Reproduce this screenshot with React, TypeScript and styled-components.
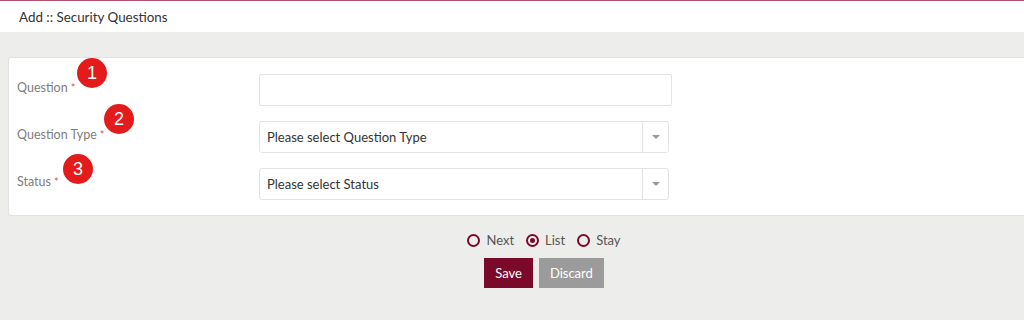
import styled, { createGlobalStyle } from 'styled-components';

const GlobalStyle = createGlobalStyle`
  html, body {
    margin: 0;
    padding: 0;
    background: #ededec;
    font-family: Lato, "Open Sans", sans-serif;
    overflow: hidden;
  }
`;

const Page = styled.div`
  width: 1024px;
  height: 320px;
  display: flex;
  flex-direction: column;
  background: #ededec;
`;

const Header = styled.div`
  height: 31px;
  background: #fff;
  border-top: 1px solid #b3506e;
  display: flex;
  align-items: center;
  padding-left: 19px;
  font-size: 13.4px;
  color: #333;
`;

const Body = styled.div`
  padding: 25px 0 0 8px;
  display: flex;
  flex-direction: column;
`;

const Card = styled.div`
  background: #fff;
  border: 1px solid #e2e2e2;
  border-right: none;
  border-radius: 3px 0 0 3px;
  padding: 16px 0 15px 8px;
  display: flex;
  flex-direction: column;
  gap: 15px;
`;

const Row = styled.div`
  display: grid;
  grid-template-columns: 242px auto;
  align-items: center;
`;

const Label = styled.label`
  position: relative;
  font-size: 12.5px;
  color: #7d7d7d;
  margin-bottom: 5px;

  span {
    color: #e05555;
    margin-left: 3px;
    font-size: 11px;
  }
`;

const Badge = styled.div<{ $left: number; $top: number }>`
  position: absolute;
  left: ${(p) => p.$left}px;
  top: ${(p) => p.$top}px;
  width: 30px;
  height: 30px;
  border-radius: 50%;
  background: #e31b1b;
  color: #fff;
  font-family: "Liberation Sans", Arial, sans-serif;
  font-size: 18px;
  display: flex;
  align-items: center;
  justify-content: center;
`;

const TextInput = styled.div`
  width: 411px;
  height: 30px;
  border: 1px solid #e3e3e3;
  border-radius: 2px;
  background: #fff;
`;

const Select = styled.div`
  width: 408px;
  height: 30px;
  border: 1px solid #e3e3e3;
  border-radius: 3px;
  background: #fff;
  display: flex;
  align-items: center;
`;

const SelectText = styled.div`
  flex: 1;
  padding-left: 7px;
  font-size: 13px;
  color: #333;
`;

const Arrow = styled.div`
  width: 25px;
  height: 30px;
  border-left: 1px solid #e3e3e3;
  display: flex;
  align-items: center;
  justify-content: center;

  &::after {
    content: '';
    border-left: 4px solid transparent;
    border-right: 4px solid transparent;
    border-top: 4px solid #999;
  }
`;

const Actions = styled.div`
  display: flex;
  flex-direction: column;
  align-items: center;
  padding-top: 16px;
  padding-left: 56px;
  gap: 10px;
`;

const RadioGroup = styled.div`
  display: flex;
  gap: 12px;
  font-size: 13px;
  color: #555;
`;

const RadioItem = styled.label`
  display: flex;
  align-items: center;
  gap: 6px;
`;

const RadioDot = styled.span<{ $checked?: boolean }>`
  width: 9px;
  height: 9px;
  border: 2px solid #7b0a2a;
  border-radius: 50%;
  display: flex;
  align-items: center;
  justify-content: center;

  &::after {
    content: '';
    display: ${(p) => (p.$checked ? 'block' : 'none')};
    width: 5px;
    height: 5px;
    border-radius: 50%;
    background: #7b0a2a;
  }
`;

const Buttons = styled.div`
  display: flex;
  gap: 6px;
`;

const Button = styled.button<{ $primary?: boolean }>`
  height: 30px;
  padding: 0 11px;
  border: none;
  font-family: Lato, sans-serif;
  font-size: 13px;
  color: #fff;
  background: ${(p) => (p.$primary ? '#7b0a2a' : '#9b9b9b')};
  cursor: pointer;
`;

const App = () => {
  return (
    <Page>
      <GlobalStyle />
      <Header>Add :: Security Questions</Header>
      <Body>
        <Card>
          <Row>
            <Label>
              Question<span>*</span>
              <Badge $left={60} $top={-22}>1</Badge>
            </Label>
            <TextInput />
          </Row>
          <Row>
            <Label>
              Question Type<span>*</span>
              <Badge $left={87} $top={-23}>2</Badge>
            </Label>
            <Select>
              <SelectText>Please select Question Type</SelectText>
              <Arrow />
            </Select>
          </Row>
          <Row>
            <Label>
              Status<span>*</span>
              <Badge $left={46} $top={-20}>3</Badge>
            </Label>
            <Select>
              <SelectText>Please select Status</SelectText>
              <Arrow />
            </Select>
          </Row>
        </Card>
        <Actions>
          <RadioGroup>
            <RadioItem><RadioDot />Next</RadioItem>
            <RadioItem><RadioDot $checked />List</RadioItem>
            <RadioItem><RadioDot />Stay</RadioItem>
          </RadioGroup>
          <Buttons>
            <Button $primary>Save</Button>
            <Button>Discard</Button>
          </Buttons>
        </Actions>
      </Body>
    </Page>
  );
};

export default App;
